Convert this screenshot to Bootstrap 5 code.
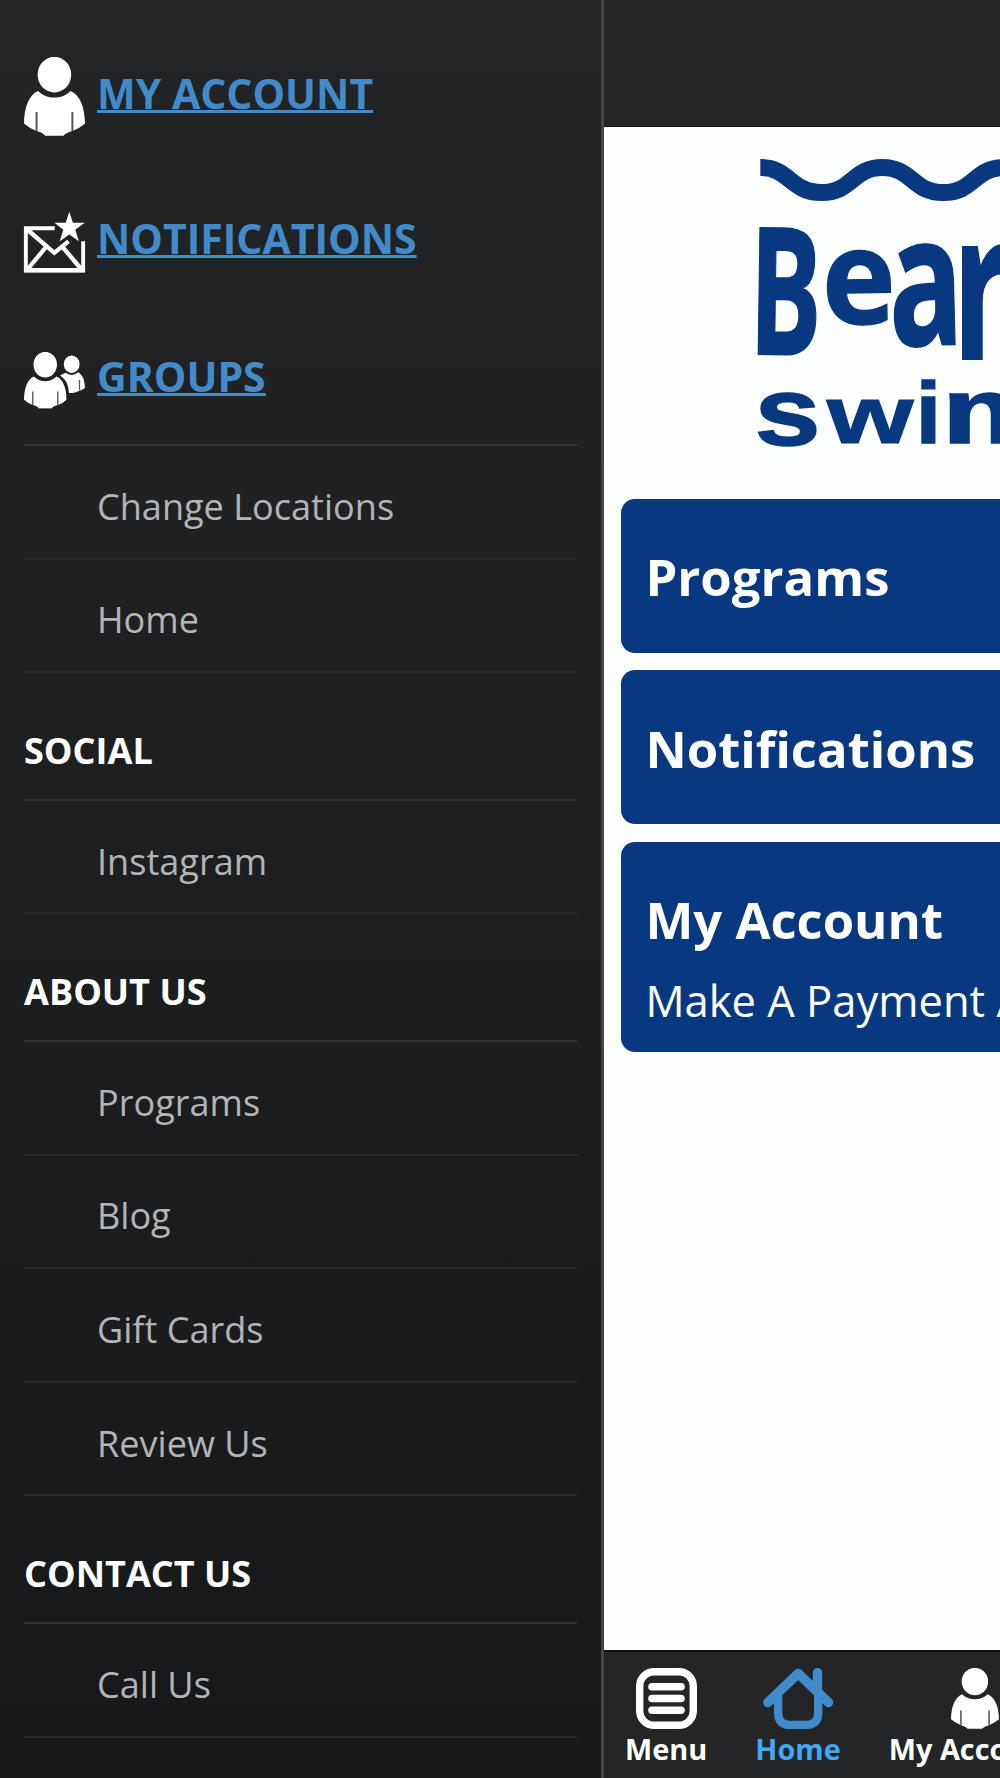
<!DOCTYPE html>
<html lang="en">
<head>
<meta charset="utf-8">
<meta name="viewport" content="width=device-width, initial-scale=1">
<title>Swim School</title>
<link href="https://cdn.jsdelivr.net/npm/bootstrap@5.3.0/dist/css/bootstrap.min.css" rel="stylesheet">
<style>
body { font-family: "Open Sans", "Noto Sans", sans-serif; background: #fdfefe; }
.app-shell { width: 1000px; height: 1778px; }
.side-menu { width: 604px; padding: 57px 24px 0; background: linear-gradient(#232425, #1d1e20 50%, #17181a); border-right: 3px solid #444547; }
.top-link { gap: 12px; }
.top-link a { color: #418bca; font-size: 41px; font-weight: 700; text-decoration: underline; text-decoration-thickness: 2.6px; text-underline-offset: 1.2px; text-decoration-skip-ink: none; white-space: nowrap; }
.link-account { height: 79px; margin-bottom: 75.8px; }
.link-account a { line-height: 73.6px; }
.link-notices { height: 60.5px; margin-bottom: 79.7px; }
.link-notices a { line-height: 53px; }
.link-groups { height: 57px; margin-bottom: 35px; }
.link-groups a { line-height: 48.2px; }
.menu-head, .menu-item { font-size: 36.1px; line-height: 50px; margin: 0; }
.menu-head { height: 127.8px; padding-top: 51.7px; color: #fff; font-weight: 700; border-bottom: 2px solid #303133; }
.menu-item { height: 113.55px; padding: 34.7px 0 0 73px; color: #b3b4b5; border-bottom: 2px solid #27282a; }
.menu-rule { border-top: 2px solid #323335; }
.main-pane { width: 396px; background: #fdfefe; }
.top-bar { height: 126.6px; background: #242527; border-bottom: 1px solid #111; }
.brand-logo { height: 372px; color: #083980; }
.tile { width: 700px; height: 154.4px; padding: 43.6px 24px 0; margin: 0 0 17.1px 17.4px; background: #083980; color: #fff; border-radius: 14px; white-space: nowrap; }
.tile h2 { font-size: 50.8px; font-weight: 700; line-height: 70px; margin: 0; }
.tile p { font-size: 43.5px; line-height: 46px; margin: 22.6px 0 0; }
.tile-tall { height: 210px; }
.tab-bar { height: 128px; padding: 16px 0 0 21px; gap: 48px; background: #242527; border-top: 2px solid #0c0d0d; color: #fff; font-size: 28.9px; font-weight: 700; white-space: nowrap; }
.tab-bar span { line-height: 40px; }
.tab-on { color: #3fa9f5; }
svg { display: block; flex: none; overflow: visible; }
</style>
</head>
<body>
<svg width="0" height="0" class="position-absolute">
  <symbol id="person" viewBox="0 0 61 79" preserveAspectRatio="none">
    <ellipse cx="30.4" cy="17.6" rx="16.8" ry="17.8" fill="#fff"/>
    <path d="M14 34C5 38 .3 50 0 66.500Q5 71 12.500 74Q20 76 21 78.800H39.500Q41 76 48.500 74Q56 71 61 66.500C60.700 50 56 38 46.500 34C38 42.800 23 42.800 14 34Z" fill="#fff"/>
    <path d="M12.600 55V74M48.400 55V74" stroke="#55585a" stroke-width="2"/>
  </symbol>
</svg>
<div class="app-shell d-flex overflow-hidden">
  <nav class="side-menu flex-shrink-0">
    <div class="top-link link-account d-flex align-items-start">
      <svg width="61" height="79"><use href="#person"/></svg>
      <a href="#">MY ACCOUNT</a>
    </div>
    <div class="top-link link-notices d-flex align-items-start">
      <svg width="61" height="60.5" viewBox="0 0 61 60.5" fill="none" stroke="#fff">
        <path d="M30.700 16.300H1.850V58.200H59.150V29.200" stroke-width="3.900"/>
        <path d="M0 58.300H61" stroke-width="4.600"/>
        <path d="M2.500 17L30.300 40.800L44.500 29.300M22 35L3 58M39 35.500L58 58" stroke-width="4.300"/>
        <path d="M45.300-.2L48.900 10.800H60.700L51.300 17.700L54.900 29.200L45.300 22.500L35.700 29.200L39.300 17.700L30.500 10.800H41.700Z" fill="#fff" stroke="none"/>
      </svg>
      <a href="#">NOTIFICATIONS</a>
    </div>
    <div class="top-link link-groups d-flex align-items-start">
      <svg width="61" height="57" viewBox="0 0 61 57">
        <use href="#person" width="42.6" height="56.7"/>
        <ellipse cx="47.700" cy="12.200" rx="7.900" ry="8.700" fill="#fff"/>
        <path d="M36 23.500L41.500 20.800Q47.700 25.200 54.300 20.300Q60.500 23.500 61 36Q57 39 53 39.800Q51 41 45 41L44.300 36Q43 28 36 23.500Z" fill="#fff"/>
        <path d="M55.500 28V38.500" stroke="#55585a" stroke-width="1.300"/>
      </svg>
      <a href="#">GROUPS</a>
    </div>
    <div class="menu-rule"></div>
    <p class="menu-item">Change Locations</p>
    <p class="menu-item">Home</p>
    <h5 class="menu-head">SOCIAL</h5>
    <p class="menu-item">Instagram</p>
    <h5 class="menu-head">ABOUT US</h5>
    <p class="menu-item">Programs</p>
    <p class="menu-item">Blog</p>
    <p class="menu-item">Gift Cards</p>
    <p class="menu-item">Review Us</p>
    <h5 class="menu-head">CONTACT US</h5>
    <p class="menu-item">Call Us</p>
  </nav>

  <main class="main-pane d-flex flex-column flex-shrink-0 overflow-hidden">
    <header class="top-bar flex-shrink-0"></header>
    <div class="brand-logo flex-shrink-0">
      <svg width="396" height="372" viewBox="604 126 396 372" fill="#083980">
        <path d="M760.300 166.500C790 166.500 790 191.500 821.500 191.500S852 166.500 882.300 166.500S912 191.500 943.300 191.500S974 166.500 1004 166.500" fill="none" stroke="#083980" stroke-width="17"/>
        <g font-family="Open Sans" font-weight="700" font-size="100" stroke="#083980" stroke-width="1">
          <text transform="translate(748.500 353) rotate(.8) scale(1.080 1.770)">B</text>
          <text transform="translate(822.500 323.500) rotate(-1) scale(1.250 1.320)">e</text>
          <text transform="translate(890 345) rotate(-1.500) scale(1.230 1.810)">a</text>
          <text transform="translate(952.500 357.500) scale(1.300 2.050)">r</text>
        </g>
        <g font-family="Liberation Sans" font-weight="700" font-size="100" stroke="#083980" stroke-width="1.500">
          <text transform="translate(754.500 444) scale(1.190 .97)">s</text>
          <text transform="translate(827 442) scale(1.110 .82)">w</text>
          <text transform="translate(915.500 442) scale(.93 .88)">i</text>
          <text transform="translate(941.500 442) scale(1.320 .93)">m</text>
        </g>
      </svg>
    </div>
    <section class="flex-grow-1">
      <div class="tile"><h2>Programs</h2></div>
      <div class="tile"><h2>Notifications</h2></div>
      <div class="tile tile-tall"><h2>My Account</h2><p>Make A Payment And</p></div>
    </section>
    <footer class="tab-bar d-flex flex-shrink-0">
      <div class="d-flex flex-column align-items-center">
        <svg width="61" height="61" fill="none" stroke="#fff">
          <rect x="3.700" y="3.700" width="53.600" height="53.600" rx="14.500" stroke-width="7.400"/>
          <path d="M16 18.800H45M16 30.500H45M16 42.300H45" stroke-width="7.600" stroke-linecap="round"/>
        </svg>
        <span>Menu</span>
      </div>
      <div class="tab-on d-flex flex-column align-items-center">
        <svg width="70" height="61" fill="none" stroke="#418bca" stroke-linecap="round" stroke-linejoin="round">
          <path d="M4.800 34.500L35.200 5.500L65.500 34.500M54.500 4.600V22" stroke-width="9.400"/>
          <path d="M15.200 27V45Q15.200 56.900 27 56.900H43.500Q55.200 56.900 55.200 45V27" stroke-width="8.400"/>
        </svg>
        <span>Home</span>
      </div>
      <div class="d-flex flex-column align-items-center">
        <svg width="48" height="61" class="ms-1"><use href="#person"/></svg>
        <span>My Account</span>
      </div>
    </footer>
  </main>
</div>
<script src="https://cdn.jsdelivr.net/npm/bootstrap@5.3.0/dist/js/bootstrap.bundle.min.js"></script>
</body>
</html>
